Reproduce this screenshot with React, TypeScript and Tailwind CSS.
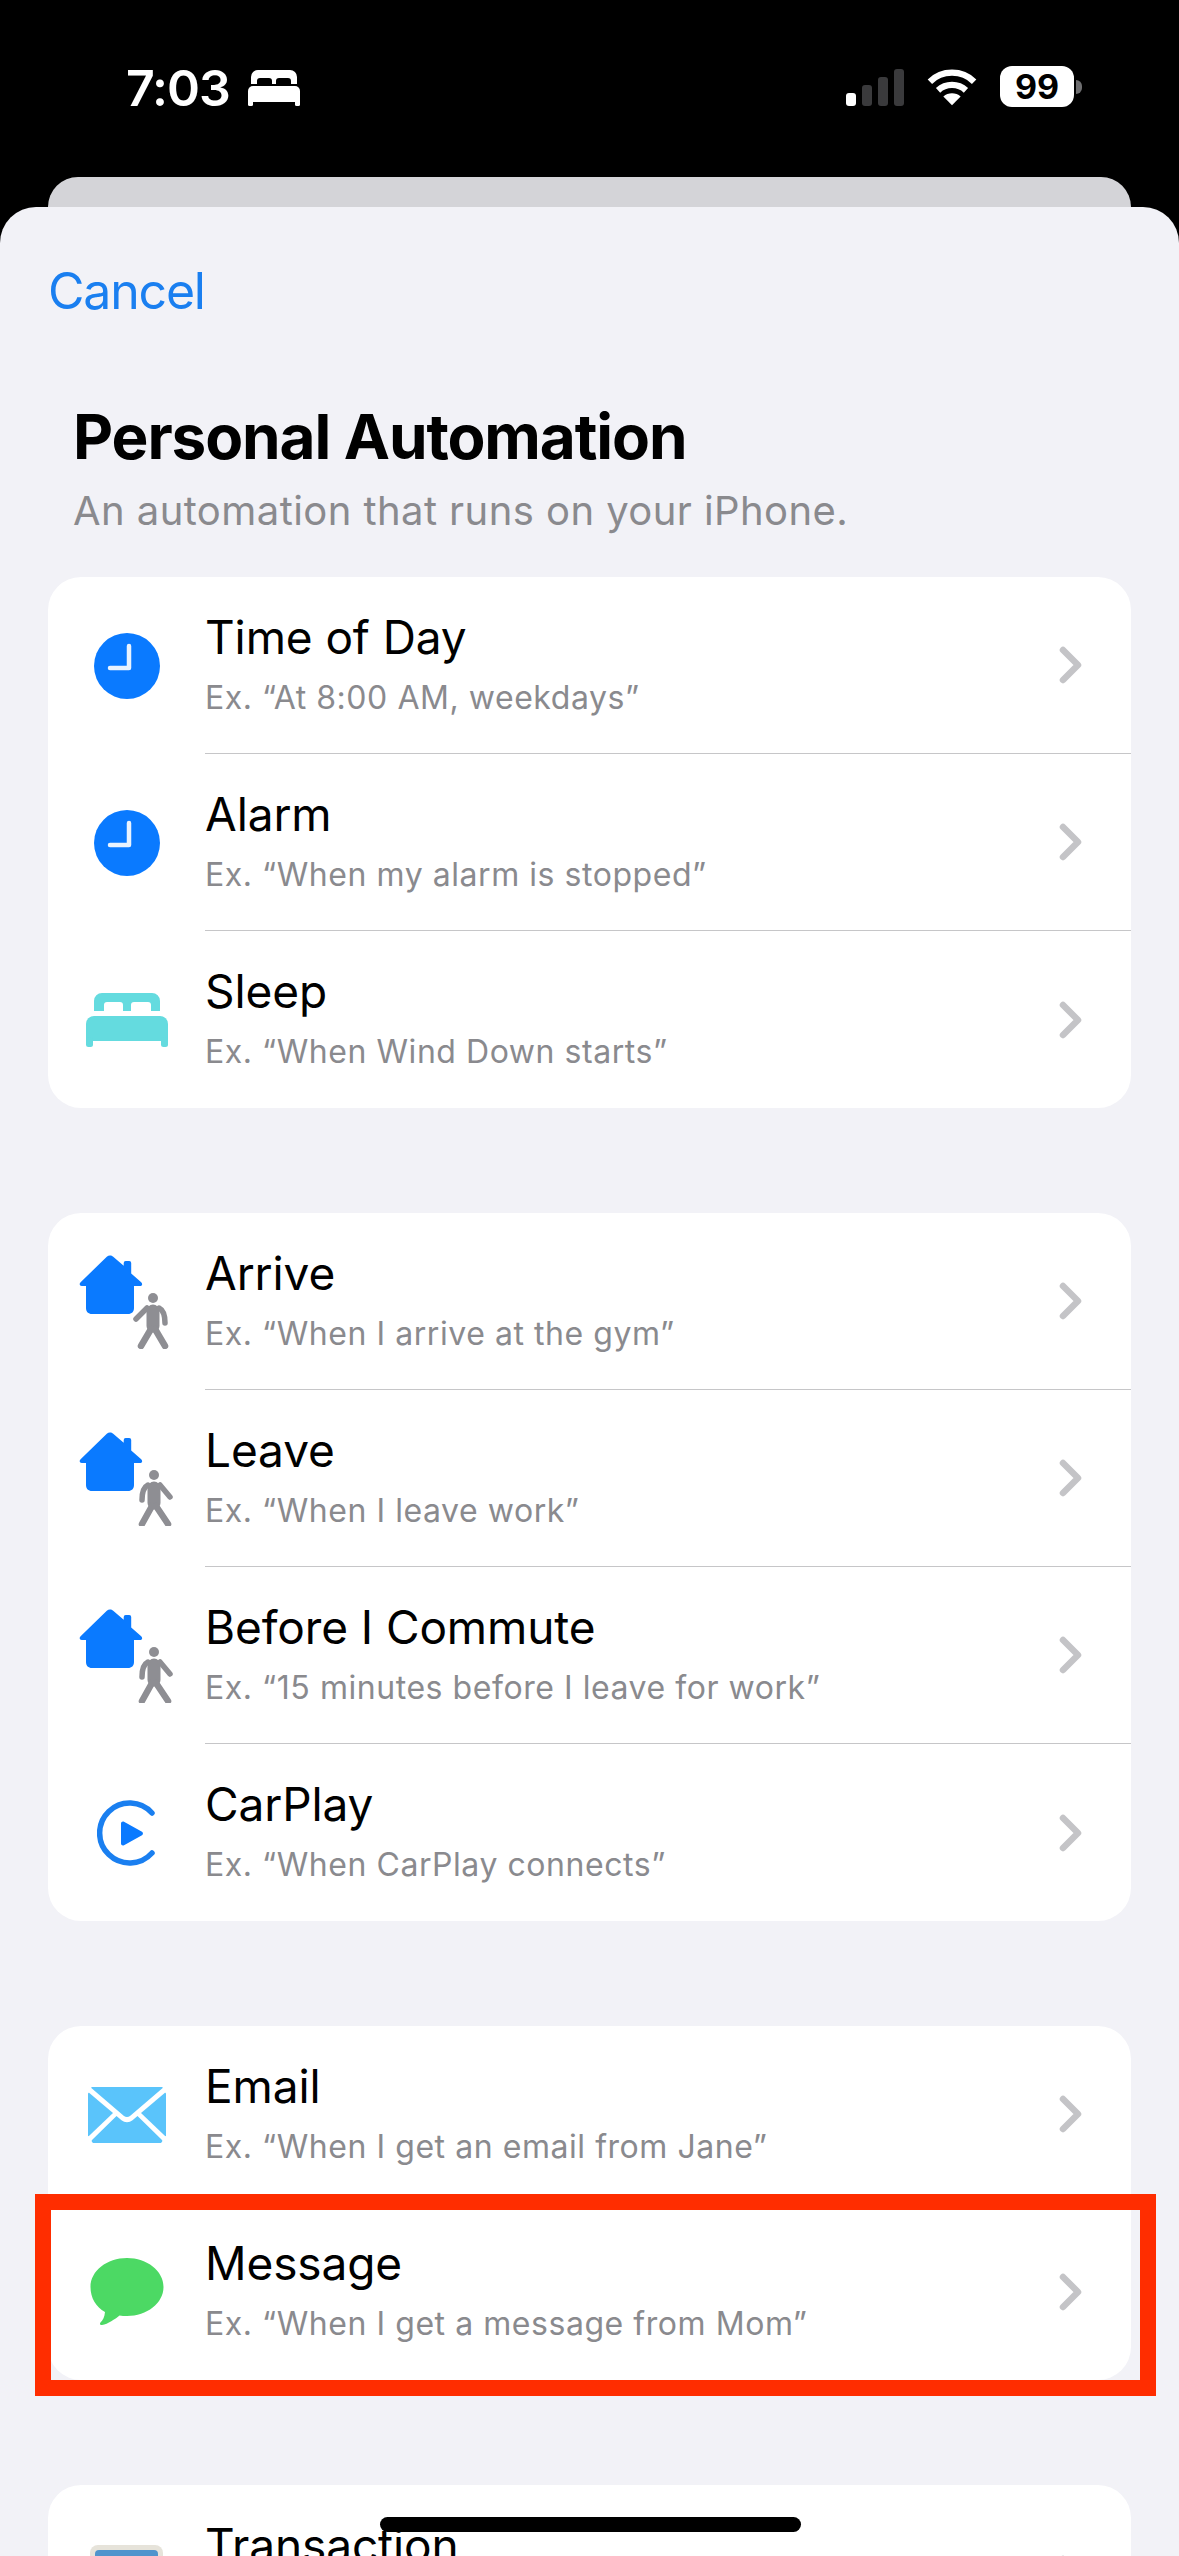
const FONT = "font-['Inter','Liberation_Sans',sans-serif]"

function Chevron() {
  return (
    <svg width="24" height="38" viewBox="0 0 24 38" fill="none" className="shrink-0">
      <path d="M4 4l15 15L4 34" stroke="#c4c4c7" strokeWidth="6.5" strokeLinecap="round" strokeLinejoin="round" />
    </svg>
  )
}

function ClockIcon() {
  return (
    <svg width="66" height="66" viewBox="0 0 66 66">
      <circle cx="33" cy="33" r="33" fill="#0a7aff" />
      <path d="M35 13v22H16" fill="none" stroke="#e9f3ff" strokeWidth="4.5" strokeLinecap="round" strokeLinejoin="round" />
    </svg>
  )
}

function BedIcon() {
  return (
    <svg width="82" height="54" viewBox="0 0 82 54" fill="#64dbdf">
      <path d="M16 0h50a8 8 0 0 1 8 8v10H65v-6a3 3 0 0 0-3-3H48a3 3 0 0 0-3 3v6h-8v-6a3 3 0 0 0-3-3H21a3 3 0 0 0-3 3v6H8V8a8 8 0 0 1 8-8z" />
      <path d="M8 23h66a8 8 0 0 1 8 8v17H0V31a8 8 0 0 1 8-8z" />
      <rect x="0" y="44" width="7" height="10" rx="2.5" />
      <rect x="75" y="44" width="7" height="10" rx="2.5" />
    </svg>
  )
}

function HomeWalker({ leaving }: { leaving?: boolean }) {
  return (
    <svg width="96" height="94" viewBox="0 0 96 94">
      <path
        d="M31 0.5c1.2 0 2.2.5 3.2 1.3l10.5 9V8a2 2 0 0 1 2-2h3.5a2 2 0 0 1 2 2v10.5l10 8.8c1.8 1.7.8 3.700-1 3.700H55v22c0 3.700-2.300 6-6 6H13c-3.700 0-6-2.300-6-6V31H2.800c-2 0-3-2.200-1.200-3.800L27.800 1.800c1-.8 2-1.300 3.200-1.300z"
        fill="#0a7aff"
      />
      {leaving ? (
        <g fill="none" stroke="#8e8e93" strokeLinecap="round" strokeLinejoin="round">
          <circle cx="75" cy="43" r="5" fill="#8e8e93" stroke="none" />
          <path d="M75 56v15" strokeWidth="13" />
          <path d="M69 53c-4 2-6 7-6 15M81 53l10 12" strokeWidth="5.5" />
          <path d="M73 74L63 92M77 74l12 18" strokeWidth="6.5" />
        </g>
      ) : (
        <g fill="none" stroke="#8e8e93" strokeLinecap="round" strokeLinejoin="round">
          <circle cx="74" cy="43" r="5" fill="#8e8e93" stroke="none" />
          <path d="M74 56v15" strokeWidth="13" />
          <path d="M68 53l-11 11M80 53c4 2 6 7 6 15" strokeWidth="5.5" />
          <path d="M72 74L62 91M76 74l10 17" strokeWidth="6.5" />
        </g>
      )}
    </svg>
  )
}

function CarPlayIcon() {
  return (
    <svg width="60" height="66" viewBox="0 0 60 66">
      <path d="M55 13A30 30 0 1 0 55 53" fill="none" stroke="#1a7ff0" strokeWidth="5.5" strokeLinecap="round" />
      <path d="M24 23.500c0-1.600 1.700-2.500 3-1.700l18 10c1.300.8 1.300 2.600 0 3.400l-18 10c-1.300.8-3 0-3-1.700z" fill="#0a7aff" />
    </svg>
  )
}

function MailIcon() {
  return (
    <svg width="78" height="56" viewBox="0 0 78 56">
      <path d="M4 0h70c.8 0 1 .8.4 1.300L42 29c-1.800 1.400-4.200 1.400-6 0L3.600 1.300C3 .8 3.200 0 4 0z" fill="#5ac4fb" />
      <path d="M0 6.500c0-.8.8-1 1.300-.6L25 26 .9 49C.4 49.400 0 49 0 48.500z" fill="#5ac4fb" />
      <path d="M78 6.500c0-.8-.8-1-1.300-.6L53 26l24.100 23c.5.4.9 0 .9-.5z" fill="#5ac4fb" />
      <path d="M28.500 29l5 4.300c3.100 2.600 7.900 2.600 11 0l5-4.300L74 53c.6.600.3 3-2 3H6c-2.300 0-2.600-2.400-2-3z" fill="#5ac4fb" />
    </svg>
  )
}

function MessageIcon() {
  return (
    <svg width="74" height="68" viewBox="0 0 74 68">
      <path
        d="M37 0c20 0 36.500 12.800 36.500 29S57 58 37 58c-3 0-5-.2-7.500-.6C25 61 18 66 12 67c-2 .2-2.500-1.500-1.500-2.500 2.500-2.500 4-5.500 4.500-10.500C6 49 .5 40 .5 29 .5 12.800 17 0 37 0z"
        fill="#4cd964"
      />
    </svg>
  )
}

function WalletIcon() {
  return (
    <div className="h-[57px] w-[73px] rounded-lg bg-[#e6e3da] p-[5px]">
      <div className="h-full rounded bg-[#4f94cd]" />
    </div>
  )
}

type Item = { title: string; example: string; icon: React.ReactNode; framed?: boolean }

const groups: Item[][] = [
  [
    { title: "Time of Day", example: "Ex. “At 8:00 AM, weekdays”", icon: <ClockIcon /> },
    { title: "Alarm", example: "Ex. “When my alarm is stopped”", icon: <ClockIcon /> },
    { title: "Sleep", example: "Ex. “When Wind Down starts”", icon: <BedIcon /> },
  ],
  [
    { title: "Arrive", example: "Ex. “When I arrive at the gym”", icon: <HomeWalker /> },
    { title: "Leave", example: "Ex. “When I leave work”", icon: <HomeWalker leaving /> },
    { title: "Before I Commute", example: "Ex. “15 minutes before I leave for work”", icon: <HomeWalker leaving /> },
    { title: "CarPlay", example: "Ex. “When CarPlay connects”", icon: <CarPlayIcon /> },
  ],
  [
    { title: "Email", example: "Ex. “When I get an email from Jane”", icon: <MailIcon /> },
    { title: "Message", example: "Ex. “When I get a message from Mom”", icon: <MessageIcon />, framed: true },
  ],
  // only the top of this row is on screen
  [{ title: "Transaction", example: "", icon: <WalletIcon /> }],
]

function Row({ item, last }: { item: Item; last: boolean }) {
  return (
    <div className="relative flex h-[177px] items-center">
      <div className="flex w-[157px] shrink-0 justify-center">{item.icon}</div>
      <div className={`flex h-full flex-1 items-center pr-[48px] ${last ? "" : "border-b-[1.5px] border-[#c6c6c8]"}`}>
        <div className="flex-1 pb-[4px]">
          <div className="text-[46px] leading-[56px] tracking-[-0.1px] text-black">{item.title}</div>
          <div className="mt-[13px] h-[40px] text-[32px] leading-[40px] tracking-[0.55px] text-[#8a8a8e]">{item.example}</div>
        </div>
        <Chevron />
      </div>
      {item.framed && (
        <div className="absolute -left-[13px] -right-[25px] -top-[9px] -bottom-[16px] border-[16px] border-[#ff2d00]" />
      )}
    </div>
  )
}

export default function App() {
  return (
    <div className={`relative h-[2556px] w-[1179px] overflow-hidden bg-black ${FONT}`}>
      {/* status bar */}
      <div className="flex h-[177px] items-start justify-between pl-[126px] pr-[97px] pt-[60px] text-white">
        <div className="flex items-center gap-[18px]">
          <span className="text-[50px] leading-[56px] font-semibold tracking-[-1px]">7:03</span>
          <svg width="52" height="36" viewBox="0 0 52 36" fill="#fff">
            <path d="M10 0h32a7 7 0 0 1 7 7v7h-6v-3a3 3 0 0 0-3-3H31a3 3 0 0 0-3 3v3h-4v-3a3 3 0 0 0-3-3H12a3 3 0 0 0-3 3v3H3V7a7 7 0 0 1 7-7z" />
            <path d="M5 16h42a5 5 0 0 1 5 5v11H0V21a5 5 0 0 1 5-5z" />
            <rect x="0" y="30" width="5" height="6" rx="1.500" />
            <rect x="47" y="30" width="5" height="6" rx="1.500" />
          </svg>
        </div>
        <div className="flex items-center gap-[23px] pt-[6px]">
          <div className="flex h-[38px] items-end gap-[6px]">
            <div className="h-[13px] w-[10px] rounded-[3px] bg-white" />
            <div className="h-[21px] w-[10px] rounded-[3px] bg-[#3a3a3c]" />
            <div className="h-[29px] w-[10px] rounded-[3px] bg-[#3a3a3c]" />
            <div className="h-[37px] w-[10px] rounded-[3px] bg-[#3a3a3c]" />
          </div>
          <svg width="50" height="38" viewBox="0 0 52 38" fill="none" stroke="#fff" strokeWidth="6.500">
            <path d="M3 13.500C15.500 1 36.500 1 49 13.500" />
            <path d="M11.500 22.500c8-7.500 21-7.500 29 0" />
            <path d="M26 38l-9-9c5-4.500 13-4.500 18 0z" fill="#fff" stroke="none" />
          </svg>
          <div className="flex items-center gap-[2px]">
            <div className="flex h-[41px] w-[74px] items-center justify-center rounded-[12px] bg-white text-[34px] font-bold text-black">
              99
            </div>
            <div className="h-[14px] w-[6px] rounded-r-full bg-[#6e6e70]" />
          </div>
        </div>
      </div>

      {/* sheet stacked behind */}
      <div className="mx-[48px] h-[30px] rounded-t-[30px] bg-[#d4d4d8]" />

      {/* sheet */}
      <div className="h-[2349px] rounded-t-[36px] bg-[#f2f2f7] px-[48px]">
        <div className="pt-[59px] text-[50px] leading-[50px] tracking-[-1.2px] text-[#1a7ff0]">Cancel</div>
        <div className="ml-[25px] mt-[86px] text-[62px] leading-[70px] font-bold tracking-[-1.1px] text-black">
          Personal Automation
        </div>
        <div className="ml-[25px] mt-[14px] text-[40px] leading-[50px] tracking-[0.43px] text-[#8a8a8e]">
          An automation that runs on your iPhone.
        </div>
        <div className="mt-[41px] flex flex-col gap-[105px]">
          {groups.map((group) => (
            <div key={group[0].title} className="rounded-[33px] bg-white">
              {group.map((item, i) => (
                <Row key={item.title} item={item} last={i === group.length - 1} />
              ))}
            </div>
          ))}
        </div>
      </div>

      {/* home indicator */}
      <div className="absolute bottom-[24px] left-[380px] h-[15px] w-[421px] rounded-full bg-black" />
    </div>
  )
}
